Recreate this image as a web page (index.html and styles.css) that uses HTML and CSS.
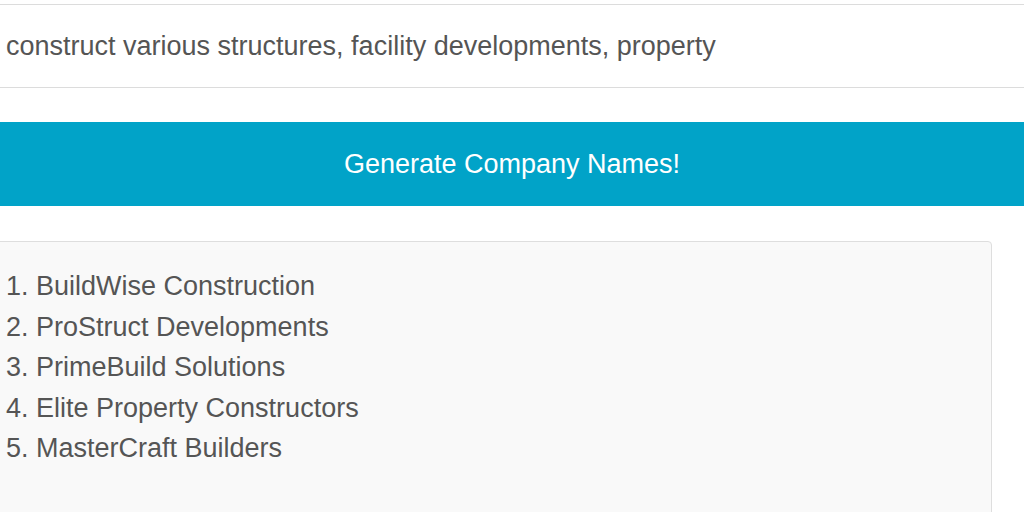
FILE: index.html
```html
<!DOCTYPE html>
<html>
<head>
<meta charset="utf-8">
<link rel="stylesheet" href="styles.css">
</head>
<body>
<div class="wrap">
  <div class="input">construct various structures, facility developments, property</div>
  <button class="btn">Generate Company Names!</button>
  <div class="results">
    <div class="item">1. BuildWise Construction</div>
    <div class="item">2. ProStruct Developments</div>
    <div class="item">3. PrimeBuild Solutions</div>
    <div class="item">4. Elite Property Constructors</div>
    <div class="item">5. MasterCraft Builders</div>
  </div>
</div>
</body>
</html>
```

FILE: styles.css
```css
html, body {
  margin: 0;
  padding: 0;
  background: #fff;
}
body {
  height: 512px;
  overflow: hidden;
  font-family: "Liberation Sans", Arial, sans-serif;
}
.wrap {
  margin: 0 -20px;
  padding-top: 4px;
  display: flex;
  flex-direction: column;
}
.input {
  height: 82px;
  border: 1px solid #dcdcdc;
  box-sizing: content-box;
  padding-left: 25px;
  display: flex;
  align-items: center;
  font-size: 27px;
  color: #555;
}
.btn {
  margin-top: 34px;
  height: 84px;
  border: none;
  background: #01a3c8;
  color: #fff;
  font-family: "Liberation Sans", Arial, sans-serif;
  font-size: 27px;
  padding: 0;
}
.results {
  margin-top: 35px;
  margin-right: 52px;
  height: 320px;
  background: #f9f9f9;
  border: 1px solid #dedede;
  border-radius: 4px;
  padding: 24px 0 0 25px;
}
.item {
  font-size: 27px;
  line-height: 40.5px;
  color: #555;
}
```
